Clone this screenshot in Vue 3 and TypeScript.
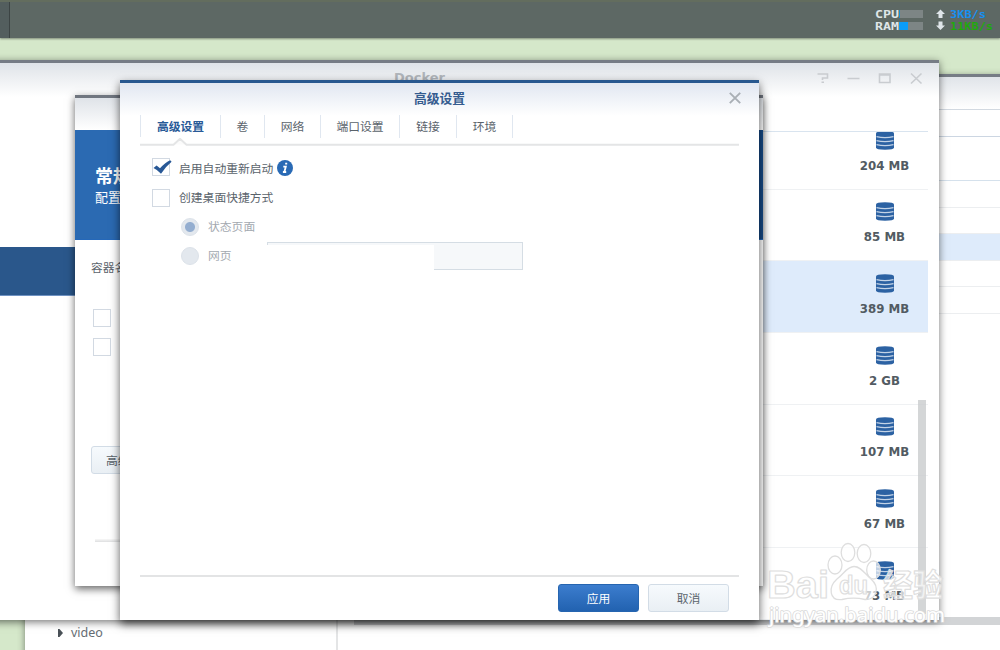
<script setup lang="ts">
interface Tab { label: string; width: number }
interface ImageRow { size: string; selected?: boolean }

const tabs: Tab[] = [
  { label: '高级设置', width: 80 },
  { label: '卷', width: 44 },
  { label: '网络', width: 56 },
  { label: '端口设置', width: 79 },
  { label: '链接', width: 57 },
  { label: '环境', width: 56 },
]
const images: ImageRow[] = [
  { size: '204 MB' },
  { size: '85 MB' },
  { size: '389 MB', selected: true },
  { size: '2 GB' },
  { size: '107 MB' },
  { size: '67 MB' },
  { size: '73 MB' },
]
</script>

<template>
  <div class="desktop">
    <section class="window files">
      <aside class="tree">
        <svg width="6" height="8" viewBox="0 0 6 8"><path d="M0 0h1.500L5 4L1.500 8H0z" fill="#4a5157" /></svg>
        <span>video</span>
      </aside>
      <div class="file-pane">
        <div class="file-head"></div>
        <div class="file-tool"></div>
        <div class="file-columns"></div>
        <div class="file-row"></div>
        <div class="file-row"></div>
        <div class="file-row chosen"></div>
        <div class="file-row"></div>
        <div class="file-row"></div>
        <div class="file-space"></div>
        <div class="hscroll"></div>
      </div>
    </section>

    <section class="window docker">
      <header class="docker-head">
        <h1>Docker</h1>
        <svg class="controls" width="110" height="14" viewBox="0 0 110 14" fill="none" stroke="#c9ccd0" stroke-width="1.600">
          <path d="M1.500 3h10v4H6.500v2M5.500 11.300h2.500M31.500 7.500h12" />
          <path d="M63.500 3h10.500v8.500H63.500zM63.500 4h10.500" />
          <path d="M95 2.500l10.500 10M105.500 2.500l-10.500 10" />
        </svg>
      </header>
      <div class="side-selected"></div>
      <div class="image-list">
        <div class="rows">
          <div v-for="row in images" :key="row.size" class="image-row" :class="{ selected: row.selected }">
            <div class="image-size">
              <svg width="18" height="19" viewBox="0 0 18 19">
                <path d="M0 2.300Q0 .3 9 .3T18 2.300V16.500Q18 18.700 9 18.700T0 16.500z" fill="#2c62a3" />
                <path d="M.5 5.600Q9 7.500 17.500 5.600M.5 9.600Q9 11.500 17.500 9.600M.5 13.600Q9 15.500 17.500 13.600" fill="none" stroke="#c3d3e6" stroke-width="1.200" />
              </svg>
              <span>{{ row.size }}</span>
            </div>
          </div>
        </div>
        <div class="vscroll"></div>
      </div>
    </section>

    <section class="window wizard">
      <div class="wizard-head"></div>
      <div class="banner"><strong>常规设置</strong><span>配置容器</span></div>
      <div class="wizard-body">
        <span class="name">容器名称</span>
        <i class="check"></i>
        <i class="check"></i>
        <button class="advanced">高级设置</button>
        <div class="rule"></div>
      </div>
    </section>

    <section class="window dialog">
      <header class="dialog-head">
        <h2>高级设置</h2>
        <svg class="close" width="12" height="12" viewBox="0 0 12 12"><path d="M.8 .9L11.200 11.100M11.200 .9L.8 11.100" stroke="#a9afb5" stroke-width="1.900" /></svg>
      </header>
      <nav class="tabs">
        <div v-for="(tab, i) in tabs" :key="tab.label" class="tab" :class="{ active: i === 0 }" :style="{ width: tab.width + 'px' }">{{ tab.label }}</div>
      </nav>
      <svg class="tab-line" width="599" height="9" viewBox="0 0 599 9">
        <path d="M33.500 6.500L40 .8L46.500 6.500z" fill="#fbfbfb" />
        <path d="M0 6.800H33.500L40 .8L46.500 6.800H599" fill="none" stroke="#e4e5e6" stroke-width="2" />
      </svg>
      <div class="form">
        <div class="option first">
          <i class="check"><svg width="20" height="16" viewBox="0 0 20 16"><path d="M.5 9L3.600 6.600L7 9.200Q12.500 3.200 17.200 1.200L18.600 2.800Q12.800 7.500 8 14.800Q4.800 11 .5 9z" fill="#285896" /></svg></i>
          <span>启用自动重新启动</span>
          <svg class="info" width="16" height="16" viewBox="0 0 16 16"><circle cx="8" cy="8" r="8" fill="#296ab5" /><path d="M8.200 3.600h2M6.300 6.700h2.500L7.500 11.400M5.900 12h3.300" fill="none" stroke="#fff" stroke-width="1.800" /></svg>
        </div>
        <div class="option"><i class="check"></i><span>创建桌面快捷方式</span></div>
        <div class="option sub"><i class="radio on"></i><span>状态页面</span></div>
        <div class="option sub"><i class="radio"></i><span>网页</span><div class="field"><div class="mask"></div></div></div>
      </div>
      <footer><button class="primary">应用</button><button>取消</button></footer>
    </section>

    <div class="taskbar">
      <svg class="meters" width="125" height="26" viewBox="875 8 125 26">
        <g class="pixel" fill="#dfe5e7">
          <text x="875" y="18" textLength="24" lengthAdjust="spacingAndGlyphs">CPU</text>
          <text x="875" y="30" textLength="24" lengthAdjust="spacingAndGlyphs">RAM</text>
        </g>
        <path d="M899 10h24v8h-24zM899 22h24v8h-24z" fill="#7d8585" />
        <path d="M899 10h1v8h-1z" fill="#168fd0" /><path d="M899 22h9v8h-9z" fill="#0b9cf8" />
        <path d="M940.500 9.500l4.500 4.500h-2.500v4h-4v-4H936zM940.500 30l4.500-4.500h-2.500v-4h-4v4H936z" fill="#dfe5e9" />
        <g class="pixel">
          <text x="950" y="18" textLength="36" lengthAdjust="spacingAndGlyphs" fill="#1690f2">3KB/s</text>
          <text x="950" y="30" textLength="43" lengthAdjust="spacingAndGlyphs" fill="#20a80c">11KB/s</text>
        </g>
      </svg>
    </div>

    <svg class="watermark" width="190" height="96" viewBox="762 538 190 96">
      <g fill="#fff" fill-opacity=".7" stroke="#dedede" stroke-width="1.300">
        <ellipse cx="835" cy="565" rx="7" ry="9" />
        <ellipse cx="848" cy="552.500" rx="6.800" ry="9" />
        <ellipse cx="864" cy="553.500" rx="6.800" ry="9" />
        <ellipse cx="873.500" cy="570" rx="6.800" ry="9" />
        <path d="M854 566.500C861 566.500 865 574 871 579C880 587 877 600 865 599.500C857 597.500 850 597.500 842 599.500C829 601 828 587 837 579C844 574 847 566.500 854 566.500z" />
      </g>
      <g stroke="#dedede" stroke-width="1.200" stroke-linejoin="round" fill="#fff" fill-opacity=".7">
        <text class="latin" x="767" y="598" font-size="39" textLength="62" lengthAdjust="spacingAndGlyphs">Bai</text>
        <text class="latin" x="839" y="594" font-size="25" textLength="29" lengthAdjust="spacingAndGlyphs">du</text>
        <text class="cjk" x="883" y="596" font-size="31" textLength="60" lengthAdjust="spacingAndGlyphs">经验</text>
      </g>
      <text class="url" x="769" y="621.500" font-size="19" stroke="#dadada" stroke-width="1.600" stroke-linejoin="round" paint-order="stroke" fill="#fff" textLength="176" lengthAdjust="spacingAndGlyphs">jingyan.baidu.com</text>
    </svg>
  </div>
</template>

<style>
body { overflow: hidden; }
</style>

<style scoped>
* { box-sizing: border-box; }
.desktop { position: relative; width: 1000px; height: 650px; overflow: hidden; background: #d5e8ca; font: 11.800px/18px "Noto Sans", "Noto Sans CJK SC", sans-serif; color: #5a636b; }
h1, h2 { margin: 0; }
i { display: block; }
svg { display: block; flex: none; }
.window { position: absolute; background: #fff; display: flex; }
.taskbar { position: absolute; left: 0; top: 0; width: 1000px; height: 38px; background: linear-gradient(90deg, #535e5e 9px, #3c4444 9px, #3c4444 10px, #5d6864 10px); border-top: 2px solid #636d5e; box-shadow: 0 1px 2px rgba(0,0,0,.4); display: flex; justify-content: flex-end; padding-top: 6px; }
.pixel { font: bold 10px "DejaVu Sans Mono", monospace; }

.files { left: 25px; top: 74px; width: 1000px; height: 600px; border-top: 3px solid #767c85; box-shadow: 0 2px 7px rgba(0,0,0,.45); }
.tree { width: 313px; border-right: 2px solid #e4e5e6; display: flex; align-items: flex-start; gap: 7px; padding: 547px 0 0 33px; height: 600px; font: 12.500px/18px "Noto Sans", sans-serif; color: #666d73; }
.tree svg { margin-top: 5px; }
.file-pane { flex: 1; display: flex; flex-direction: column; padding-left: 16px; }
.file-head { height: 33px; border-bottom: 1px solid #d2d9e1; background: linear-gradient(#e0e4e9, #fff); }
.file-tool { height: 27px; border-bottom: 1px solid #ccd6e2; }
.file-columns { height: 44px; border-bottom: 1px solid #d5e1ec; }
.file-row { height: 26.500px; border-bottom: 1px solid #eceef0; }
.file-row.chosen { background: #deebfb; }
.file-space { height: 303px; }
.hscroll { height: 8px; background: #d2d4d6; }

.docker { left: -20px; top: 60px; width: 959px; height: 560px; border-top: 3px solid #767c85; flex-direction: column; box-shadow: 0 2px 8px rgba(0,0,0,.55); }
.docker-head { height: 68px; flex: none; background: linear-gradient(#dfe3e8, #fff 34px); display: flex; align-items: flex-start; justify-content: space-between; padding: 6px 13px 0 414px; }
h1 { font: bold 13px/18px "DejaVu Sans", sans-serif; color: #b0b5ba; }
.controls { margin-top: 2px; }
.side-selected { position: absolute; left: 0; top: 184px; width: 200px; height: 49px; background: #2a578b; border-bottom: 1px solid #6f92c2; }
.image-list { height: 489px; margin-left: 300px; width: 648px; border-top: 1px solid #d9e4ef; overflow: hidden; position: relative; }
.rows { margin-top: -14px; }
.image-row { height: 71.660px; border-bottom: 1px solid #eff1f3; display: flex; justify-content: flex-end; padding: 12.700px 13px 0 0; }
.image-row.selected { background: #deebfb; }
.image-size { width: 61px; display: flex; flex-direction: column; align-items: center; gap: 7px; font: bold 11.800px/18px "DejaVu Sans", sans-serif; color: #525b62; white-space: nowrap; }
.vscroll { position: absolute; right: 2px; top: 268px; width: 8px; height: 214px; background: rgba(200,202,204,.78); }

.wizard { left: 75px; top: 95px; width: 688px; height: 491px; border-top: 3px solid #70767f; flex-direction: column; box-shadow: 0 3px 8px rgba(0,0,0,.6); }
.wizard-head { height: 32px; flex: none; background: linear-gradient(#dfe3e8, #fff); }
.banner { height: 110px; flex: none; background: linear-gradient(90deg, #2b6ab2 660px, #174a86 680px); border-bottom: 1px solid #2568b9; color: #fff; padding: 35px 0 0 20px; display: flex; flex-direction: column; font-size: 13px; line-height: 18px; }
.banner strong { font-size: 18px; line-height: 23px; }
.wizard-body { padding: 18px 16px 0; display: flex; flex-direction: column; align-items: flex-start; }
.wizard-body .check { margin: 33px 0 0 2px; }
.wizard-body .check + .check { margin-top: 11px; }
.wizard-body .advanced { margin-top: 90px; padding-left: 14px; text-align: left; }
.rule { height: 3px; margin: 65px 0 0 4px; width: 640px; background: linear-gradient(#f8f8f8, #dedfe0); }

.dialog { left: 120px; top: 80px; width: 639px; height: 540px; border-top: 3px solid #28588f; flex-direction: column; align-items: stretch; box-shadow: 0 4px 9px rgba(0,0,0,.65); }
.dialog-head { height: 33px; flex: none; background: linear-gradient(#e1e7f1, #fff); display: grid; grid-template-columns: 1fr auto 1fr; padding: 6px 18px 0 18px; }
h2 { grid-column: 2; font: bold 12.800px/18px "Noto Sans CJK SC", sans-serif; color: #355c8f; }
.close { justify-self: end; margin-top: 3px; }
.tabs { display: flex; height: 22px; flex: none; margin: -1px 0 0 20px; border-left: 1px solid #e0e7f0; }
.tab { height: 23px; line-height: 23px; text-align: center; border-right: 1px solid #e0e7f0; flex: none; }
.tab.active { color: #285a97; font-weight: bold; }
.tab-line { margin: 1px 0 0 20px; }
.form { flex: 1; padding: 7px 32px 0; display: flex; flex-direction: column; }
.option { display: flex; align-items: center; height: 29px; flex: none; }
.option span { margin: 0 0 2px 9px; }
.check { width: 18px; height: 18px; border: 1px solid #d2d9e2; background: #fff; flex: none; }
.first .check { margin-bottom: 3px; }
.info { margin-left: 4px; margin-bottom: 2px; }
.option.sub { padding-left: 29px; color: #a3a9b0; }
.radio { width: 18px; height: 18px; border-radius: 50%; border: 1px solid #dce2e9; background: #e3e8ee; flex: none; }
.radio.on { background: radial-gradient(circle, #94aed0 4.500px, #e3e8ee 5.500px); }
.field { width: 256px; height: 28px; margin: 1px 0 0 35px; border: 1px solid #d5dde4; background: #f6f8fa; flex: none; }
.mask { width: 167px; height: 26px; margin: 2px 0 0 -1px; background: #fff; }
footer { flex: none; height: 45px; margin: 0 20px; border-top: 2px solid #e3e4e5; display: flex; justify-content: flex-end; gap: 9px; padding: 7px 10px 0 0; }
button { width: 81px; height: 28px; flex: none; margin: 0; padding: 0 0 1px; border: 1px solid #d2dce6; border-radius: 3px; background: linear-gradient(#f6fafd, #e9eff4); color: #5a636b; font: inherit; white-space: nowrap; }
button.primary { color: #fff; border-color: #2665b0; background: linear-gradient(#3c7dce, #2262b0); }

.watermark { position: absolute; left: 762px; top: 538px; }
.latin { font-family: "Liberation Sans", sans-serif; font-weight: bold; }
.cjk { font-family: "Noto Sans CJK SC", sans-serif; font-weight: bold; }
.url { font-family: "Noto Sans", sans-serif; }
</style>
